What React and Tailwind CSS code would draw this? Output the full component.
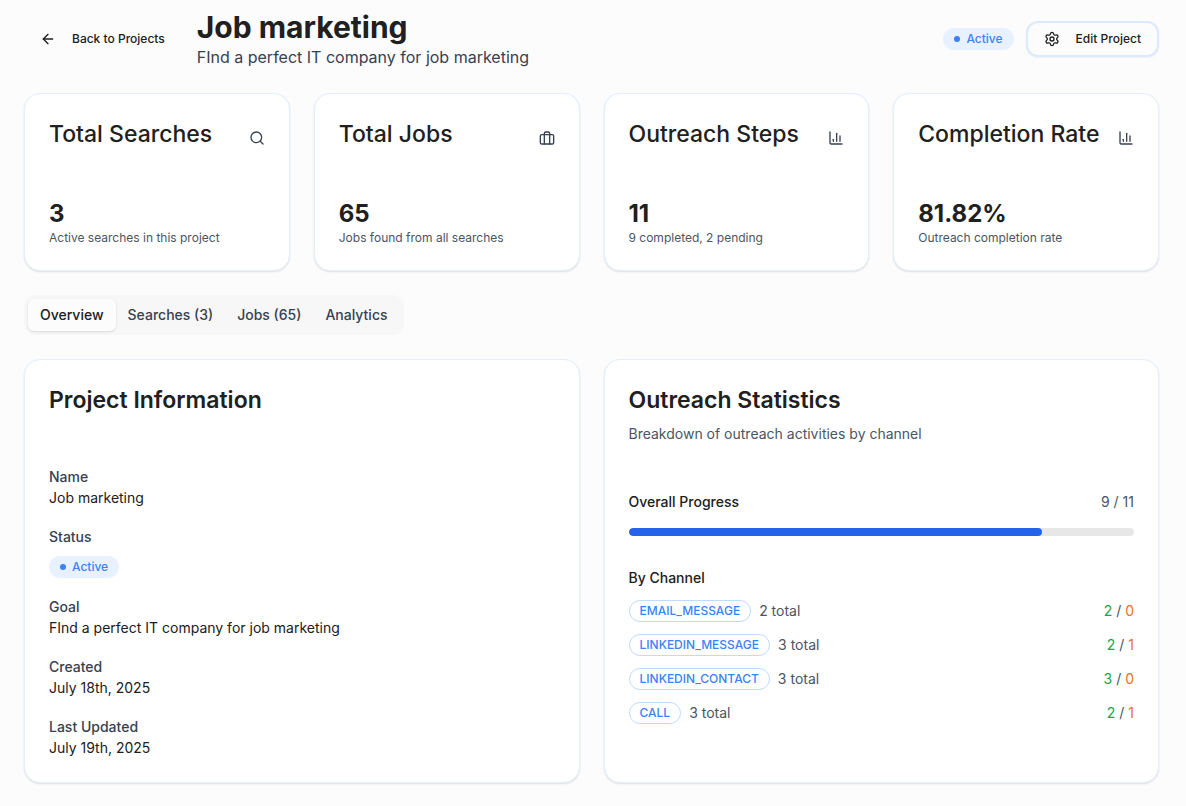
import { ArrowLeft, ChartColumn, Search, Settings } from "lucide-react";

function BriefcaseIcon({ className }) {
  return (
    <svg
      viewBox="0 0 24 24"
      fill="none"
      stroke="currentColor"
      strokeWidth="2"
      strokeLinecap="round"
      strokeLinejoin="round"
      aria-hidden="true"
      className={className}
    >
      <rect x="2" y="7" width="20" height="14" rx="2" />
      <path d="M16 21V5a2 2 0 0 0-2-2h-4a2 2 0 0 0-2 2v16" />
    </svg>
  );
}

const stats = [
  { title: "Total Searches", value: "3", note: "Active searches in this project", Icon: Search },
  { title: "Total Jobs", value: "65", note: "Jobs found from all searches", Icon: BriefcaseIcon },
  { title: "Outreach Steps", value: "11", note: "9 completed, 2 pending", Icon: ChartColumn },
  { title: "Completion Rate", value: "81.82%", note: "Outreach completion rate", Icon: ChartColumn },
];

const tabs = ["Overview", "Searches (3)", "Jobs (65)", "Analytics"];

const details = [
  { label: "Name", value: "Job marketing" },
  { label: "Status", status: true },
  { label: "Goal", value: "FInd a perfect IT company for job marketing" },
  { label: "Created", value: "July 18th, 2025" },
  { label: "Last Updated", value: "July 19th, 2025" },
];

const channels = [
  { name: "EMAIL_MESSAGE", total: 2, done: 2, pending: 0 },
  { name: "LINKEDIN_MESSAGE", total: 3, done: 2, pending: 1 },
  { name: "LINKEDIN_CONTACT", total: 3, done: 3, pending: 0 },
  { name: "CALL", total: 3, done: 2, pending: 1 },
];

function Card({ children }) {
  return (
    <section className="rounded-2xl border border-[#e3effd] bg-white p-6 shadow-[0_1px_2px_rgba(0,0,0,0.12)]">
      {children}
    </section>
  );
}

function ActiveBadge() {
  return (
    <span className="flex h-[22px] w-fit items-center gap-1.5 rounded-full border border-transparent bg-[#e8f1ff] px-2.5 text-xs font-medium text-[#3b82f6]">
      <span className="size-1.5 rounded-full bg-[#3b82f6]" />
      Active
    </span>
  );
}

export default function App() {
  return (
    <main className="min-h-screen bg-[#fcfcfc] pt-[9px] pr-[27px] pb-[22px] pl-6 font-['Inter',sans-serif] text-[#202020]">
      <header className="flex items-center justify-between">
        <div className="flex items-center gap-4">
          <button type="button" className="flex h-9 items-center gap-4 px-4 text-xs font-medium">
            <ArrowLeft className="size-4" />
            Back to Projects
          </button>
          <div>
            <h1 className="text-3xl leading-9 font-bold">Job marketing</h1>
            <p className="text-base leading-6 text-[#374151]">FInd a perfect IT company for job marketing</p>
          </div>
        </div>
        <div className="flex items-center gap-3">
          <ActiveBadge />
          <button
            type="button"
            className="flex h-9 items-center gap-4 rounded-xl border-2 border-[#dbeafe] bg-[#fcfcfc] px-4 text-xs font-medium shadow-xs"
          >
            <Settings className="size-4" />
            Edit Project
          </button>
        </div>
      </header>

      <div className="mt-6 grid grid-cols-4 gap-6">
        {stats.map(({ title, value, note, Icon }) => (
          <Card key={title}>
            <div className="flex items-center justify-between">
              <h2 className="text-[23px] leading-8 font-medium">{title}</h2>
              <Icon className="mt-2 size-4 shrink-0 text-[#374151]" />
            </div>
            <p className="mt-12 text-2xl leading-8 font-bold">{value}</p>
            <p className="text-xs leading-4 text-[#4b5563]">{note}</p>
          </Card>
        ))}
      </div>

      <div role="tablist" className="mt-6 flex h-10 w-fit items-center rounded-xl bg-[#f7f7f7] p-1">
        {tabs.map((tab, index) => (
          <button
            key={tab}
            type="button"
            role="tab"
            aria-selected={index === 0}
            className="h-8 rounded-md px-3 text-sm font-medium text-[#374151] aria-selected:bg-[#fcfcfc] aria-selected:text-[#202020] aria-selected:shadow-sm"
          >
            {tab}
          </button>
        ))}
      </div>

      <div className="mt-6 grid grid-cols-2 gap-6">
        <Card>
          <h2 className="text-[23px] leading-8 font-semibold">Project Information</h2>
          <dl className="mt-12 flex flex-col gap-4">
            {details.map(({ label, value, status }) => (
              <div key={label}>
                <dt className="text-base leading-6">
                  <span className="text-sm leading-5 font-medium text-[#374151]">{label}</span>
                </dt>
                {status ? (
                  <dd className="mt-2">
                    <ActiveBadge />
                  </dd>
                ) : (
                  <dd className="text-sm">{value}</dd>
                )}
              </div>
            ))}
          </dl>
        </Card>

        <Card>
          <h2 className="text-[23px] leading-8 font-semibold">Outreach Statistics</h2>
          <p className="mt-2 text-sm text-[#4b5563]">Breakdown of outreach activities by channel</p>
          <div className="mt-12 flex justify-between text-sm">
            <span className="font-medium">Overall Progress</span>
            <span className="text-[#4b5563]">9 / 11</span>
          </div>
          <div
            role="progressbar"
            aria-label="Overall Progress"
            aria-valuemin={0}
            aria-valuemax={11}
            aria-valuenow={9}
            className="mt-4 h-2 overflow-hidden rounded-full bg-[#e7e7e7]"
          >
            <div className="h-full rounded-full bg-[#2563eb]" style={{ width: `${(9 / 11) * 100}%` }} />
          </div>
          <h3 className="mt-8 text-sm font-medium">By Channel</h3>
          <ul className="mt-3 flex flex-col gap-3">
            {channels.map(({ name, total, done, pending }) => (
              <li key={name} className="flex items-center justify-between text-sm text-[#4b5563]">
                <span className="flex items-center gap-2">
                  <span className="flex h-[22px] items-center rounded-full border border-[#bfdbfe] px-2.5 text-xs font-medium text-[#3b82f6]">
                    {name}
                  </span>
                  {total} total
                </span>
                <span>
                  <span className="text-[#16a34a]">{done}</span> / <span className="text-[#e67320]">{pending}</span>
                </span>
              </li>
            ))}
          </ul>
        </Card>
      </div>
    </main>
  );
}
